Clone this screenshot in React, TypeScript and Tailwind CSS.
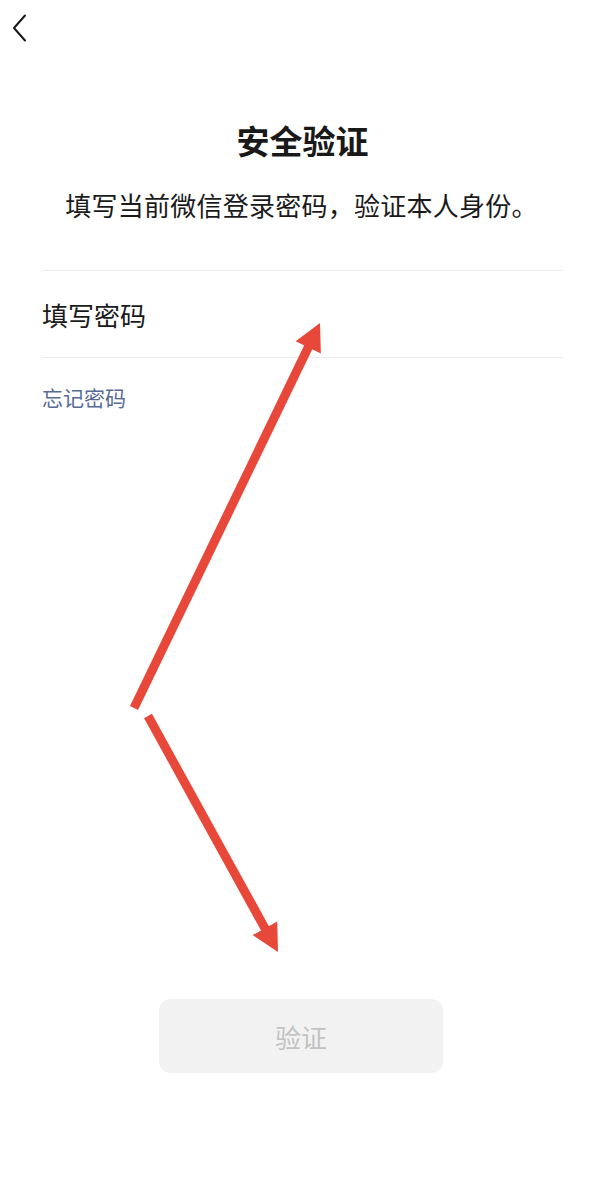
import React from 'react';

const font = { fontFamily: '"Noto Sans CJK SC", "Noto Sans", sans-serif' };

function Arrow({ x1, y1, x2, y2 }: { x1: number; y1: number; x2: number; y2: number }) {
  const dx = x2 - x1;
  const dy = y2 - y1;
  const len = Math.sqrt(dx * dx + dy * dy);
  const ux = dx / len;
  const uy = dy / len;
  const head = 27;
  const half = 14;
  const bx = x2 - ux * head;
  const by = y2 - uy * head;
  const pts = `${x2},${y2} ${bx - uy * half},${by + ux * half} ${bx + uy * half},${by - ux * half}`;
  return (
    <g>
      <line x1={x1} y1={y1} x2={bx + ux * 2} y2={by + uy * 2} stroke="#e8483a" strokeWidth={9} />
      <polygon points={pts} fill="#e8483a" />
    </g>
  );
}

export default function App() {
  return (
    <div className="relative w-[612px] h-[1183px] bg-white overflow-hidden" style={font}>
      {/* Header */}
      <div className="h-[56px] pl-[12px] pt-[14px]">
        <svg width="16" height="28" viewBox="0 0 16 28" fill="none">
          <polyline points="13,1.5 2,14 13,26.5" stroke="#1a1a1a" strokeWidth="2" strokeLinecap="round" strokeLinejoin="round" />
        </svg>
      </div>

      <div className="pl-[42px] pr-[49px]">
        <h1 className="mt-[61px] text-center text-[33px] leading-[46px] font-bold text-[#191919]">安全验证</h1>
        <p className="mt-[24px] pr-[2px] text-center text-[26px] leading-[36px] text-[#1a1a1a] tracking-[0.01em]">
          填写当前微信登录密码，验证本人身份。
        </p>

        <div className="mt-[47px] border-t border-[#ededed]" />
        <div className="h-[86px] flex items-center text-[26px] text-[#1a1a1a]">填写密码</div>
        <div className="border-t border-[#ededed]" />

        <div className="mt-[24px] text-[21px] leading-[30px] text-[#576b95]">忘记密码</div>

        <button className="ml-[117px] mt-[587px] flex w-[284px] h-[74px] items-center justify-center rounded-[12px] bg-[#f2f2f2] text-[26px] text-[#c2c2c2]">
          验证
        </button>
      </div>

      {/* Annotation arrows */}
      <svg className="absolute inset-0 pointer-events-none" width="612" height="1183">
        <Arrow x1={134} y1={708} x2={320} y2={323} />
        <Arrow x1={148} y1={716} x2={278} y2={952} />
      </svg>
    </div>
  );
}
